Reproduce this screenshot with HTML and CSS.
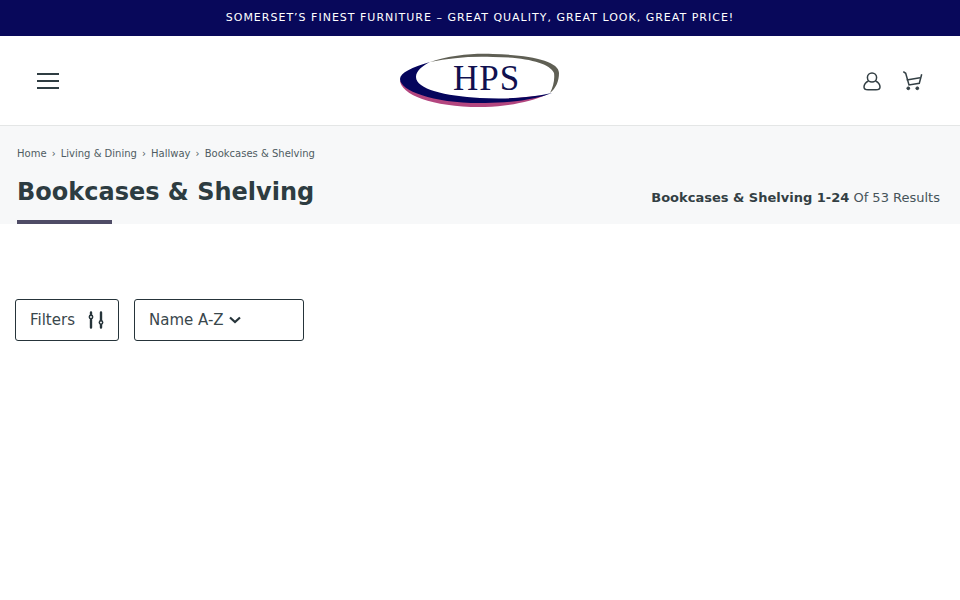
FILE: index.html
```html
<!DOCTYPE html>
<html lang="en">
<head>
    <meta charset="UTF-8">
    <meta name="viewport" content="width=device-width, initial-scale=1.0">
    <title>Bookcases &amp; Shelving - HPS</title>
    <link rel="stylesheet" href="styles.css">
</head>
<body>
    <div class="promo-bar">SOMERSET’S FINEST FURNITURE – GREAT QUALITY, GREAT LOOK, GREAT PRICE!</div>

    <header class="site-header">
        <button class="menu-btn" type="button" aria-label="Menu">
            <span></span><span></span><span></span>
        </button>
        <a class="logo" href="#" aria-label="HPS">
            <svg width="160" height="56" viewBox="0 0 160 56">
                <path fill="#b3467f" d="M0 27C0 42 35 55 85 54C112 53 132 48 146 42L85 48C40 48 5 36 0 27Z"/>
                <path fill="#05055c" d="M30 9C12 14 0 20 0 26C0 38 35 51 85 50C115 50 140 45 152 40C125 46 100 46 80 45C45 43 16 36 16 24C16 18 22 13 30 9Z"/>
                <path fill="#5f5f54" d="M30 9C50 2 75 0 93 1C130 2 159 8 159 20C159 28 156 35 150 40C153 34 155 27 154 20C150 10 125 4 93 4C70 3 50 5 30 9Z"/>
                <text class="logo-text" x="86.500" y="36.500" text-anchor="middle">HPS</text>
            </svg>
        </a>
        <div class="header-icons">
            <svg width="20" height="20" viewBox="0 0 20 20" fill="none" stroke="#333f44" stroke-width="1.5">
                <circle cx="10" cy="6.5" r="4.6"/>
                <path d="M6.5 10C3.500 11.500 2 14 2 16C2 18 3.500 18.800 6 18.800H14C16.500 18.800 18 18 18 16C18 14 16.500 11.500 13.500 10"/>
            </svg>
            <svg width="22" height="20" viewBox="0 0 22 20" fill="none" stroke="#333f44" stroke-width="1.5">
                <path d="M1.300 0.700L3.700 2.300L7 14L17.300 12.300L19.700 3.300"/>
                <path d="M4.700 9L18 6.700"/>
                <circle cx="6.300" cy="17.300" r="1.400" fill="#333f44" stroke-width="1"/>
                <circle cx="15.300" cy="17.300" r="1.400" fill="#333f44" stroke-width="1"/>
            </svg>
        </div>
    </header>

    <section class="page-head">
        <nav class="breadcrumbs">
            <a href="#">Home</a><span>›</span>
            <a href="#">Living &amp; Dining</a><span>›</span>
            <a href="#">Hallway</a><span>›</span>
            <a href="#">Bookcases &amp; Shelving</a>
        </nav>
        <div class="title-row">
            <h1 class="page-title">Bookcases &amp; Shelving</h1>
            <p class="result-count"><strong>Bookcases &amp; Shelving 1-24</strong> Of 53 Results</p>
        </div>
    </section>

    <div class="toolbar">
        <button class="filter-btn" type="button">
            Filters
            <svg width="18" height="20" viewBox="0 0 18 20" fill="none" stroke="#26343a" stroke-width="2.400" stroke-linecap="round">
                <path d="M4 2.500V4.500M4 9.500V17.500M14 2.500V10M14 15V17.500"/>
                <circle cx="4" cy="7" r="1.700" stroke-width="1.500"/>
                <circle cx="14" cy="12.500" r="1.700" stroke-width="1.500"/>
            </svg>
        </button>
        <button class="sort-btn" type="button">
            Name A-Z
            <svg width="12" height="8" viewBox="0 0 12 8" fill="none" stroke="#26343a" stroke-width="2.200">
                <path d="M1 1.500L6 6L11 1.500"/>
            </svg>
        </button>
    </div>
</body>
</html>
```

FILE: styles.css
```css
* {
    margin: 0;
    padding: 0;
    box-sizing: border-box;
}

body {
    font-family: 'DejaVu Sans', sans-serif;
    background: #ffffff;
    color: #333f44;
}

.promo-bar {
    height: 36px;
    line-height: 35px;
    background: #08085a;
    color: #ffffff;
    font-size: 11px;
    letter-spacing: 1px;
    text-align: center;
}

.site-header {
    height: 90px;
    padding: 0 36px;
    display: grid;
    grid-template-columns: 1fr auto 1fr;
    align-items: center;
    border-bottom: 1px solid #e4e6e6;
}

.menu-btn {
    width: 22px;
    margin-left: 1px;
    display: flex;
    flex-direction: column;
    gap: 5px;
    background: none;
    border: none;
}

.menu-btn span {
    display: block;
    height: 2px;
    background: #2f3d42;
}

.logo {
    display: block;
    height: 56px;
}

.logo-text {
    font-family: 'Liberation Serif', serif;
    font-size: 35px;
    letter-spacing: 1px;
    fill: #10104f;
}

.header-icons {
    display: flex;
    justify-content: flex-end;
    align-items: center;
    gap: 20px;
}

.page-head {
    height: 98px;
    padding: 22px 20px 0 17px;
    background: #f7f8f9;
}

.breadcrumbs {
    display: flex;
    gap: 5.1px;
    font-size: 10px;
    line-height: 12px;
    color: #4f5c62;
}

.breadcrumbs a {
    color: inherit;
    text-decoration: none;
}

.title-row {
    margin-top: 14px;
    display: flex;
    justify-content: space-between;
    align-items: flex-end;
}

.page-title {
    width: 95px;
    height: 50px;
    white-space: nowrap;
    font-size: 24px;
    line-height: 36px;
    font-weight: 700;
    color: #2d3c41;
    border-bottom: 4px solid #4f4c66;
}

.result-count {
    font-size: 13px;
    line-height: 16px;
    margin-bottom: 18px;
    color: #46545a;
}

.result-count strong {
    color: #333f44;
}

.toolbar {
    margin-top: 75px;
    padding-left: 15px;
    display: flex;
    gap: 15px;
}

.filter-btn,
.sort-btn {
    height: 42px;
    display: flex;
    align-items: center;
    background: #ffffff;
    border: 1px solid #26343a;
    border-radius: 3px;
    font-family: inherit;
    font-size: 15px;
    color: #3a474c;
    padding: 0 14px;
}

.filter-btn {
    width: 104px;
    justify-content: space-between;
    padding-right: 13px;
}

.sort-btn {
    width: 170px;
    gap: 5px;
}
```
